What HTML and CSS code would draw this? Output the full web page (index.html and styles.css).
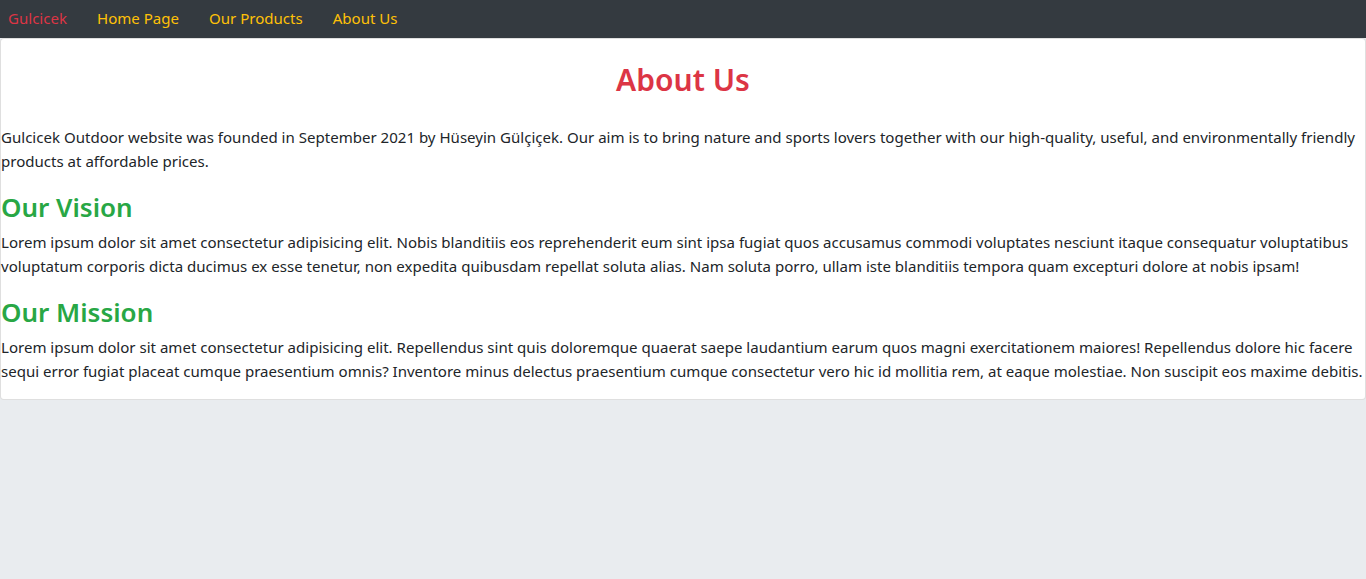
FILE: index.html
```html
<!DOCTYPE html>
<html lang="en">
<head>
<meta charset="utf-8">
<title>About Us - Gulcicek</title>
<link rel="stylesheet" href="styles.css">
</head>
<body>
<nav class="navbar">
  <a class="brand" href="#">Gulcicek</a>
  <a class="nav-link" href="#">Home Page</a>
  <a class="nav-link" href="#">Our Products</a>
  <a class="nav-link" href="#">About Us</a>
</nav>
<main class="card">
  <h1 class="title">About Us</h1>
  <p>Gulcicek Outdoor website was founded in September 2021 by Hüseyin Gülçiçek. Our aim is to bring nature and sports lovers together with our high-quality, useful, and environmentally friendly products at affordable prices.</p>
  <h3 class="subtitle">Our Vision</h3>
  <p>Lorem ipsum dolor sit amet consectetur adipisicing elit. Nobis blanditiis eos reprehenderit eum sint ipsa fugiat quos accusamus commodi voluptates nesciunt itaque consequatur voluptatibus voluptatum corporis dicta ducimus ex esse tenetur, non expedita quibusdam repellat soluta alias. Nam soluta porro, ullam iste blanditiis tempora quam excepturi dolore at nobis ipsam!</p>
  <h3 class="subtitle">Our Mission</h3>
  <p>Lorem ipsum dolor sit amet consectetur adipisicing elit. Repellendus sint quis doloremque quaerat saepe laudantium earum quos magni exercitationem maiores! Repellendus dolore hic facere sequi error fugiat placeat cumque praesentium omnis? Inventore minus delectus praesentium cumque consectetur vero hic id mollitia rem, at eaque molestiae. Non suscipit eos maxime debitis.</p>
</main>
</body>
</html>
```
FILE: styles.css
```css
* { box-sizing: border-box; }
html, body { margin: 0; padding: 0; }
body {
  background: #e9ecef;
  font-family: "Segoe UI", "Noto Sans", sans-serif;
  font-size: 15.05px;
  line-height: 24px;
  color: #212529;
}
.navbar {
  display: flex;
  align-items: center;
  height: 38px;
  background: #343a40;
  padding: 0 0 2px 8px;
}
.navbar a { text-decoration: none; }
.brand {
  color: #dc3545;
  margin-right: 15px;
}
.nav-link {
  color: #ffc107;
  padding: 0 15px;
}
.card {
  background: #fff;
  border: 1px solid rgba(0,0,0,.125);
  border-radius: 4px;
}
.title {
  text-align: center;
  color: #dc3545;
  font-size: 30px;
  font-weight: 600;
  line-height: 36px;
  margin: 23px 0 27px;
}
p { margin: 0 0 16px; }
.subtitle {
  color: #28a745;
  font-size: 26px;
  font-weight: 600;
  line-height: 36px;
  margin: 0 0 5px;
}
```
